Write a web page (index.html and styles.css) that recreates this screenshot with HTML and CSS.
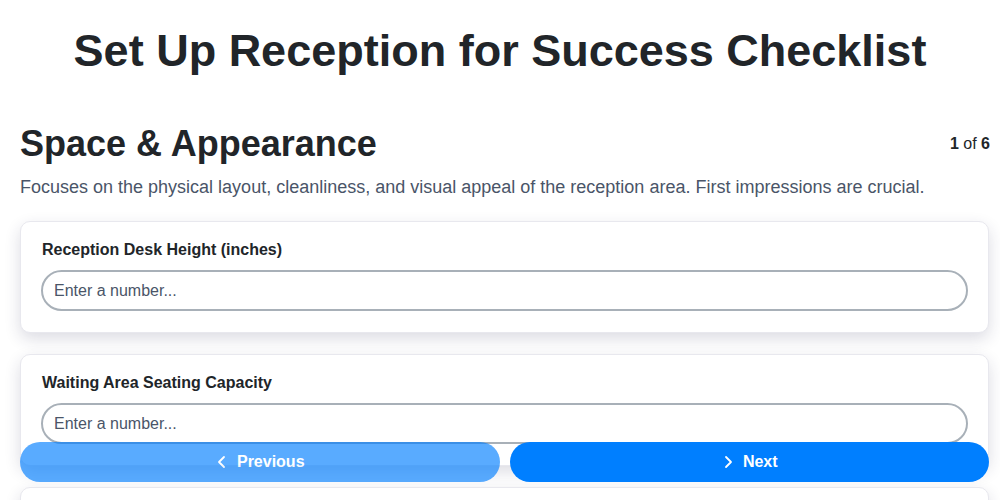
FILE: index.html
```html
<!DOCTYPE html>
<html>
<head>
<meta charset="utf-8">
<link rel="stylesheet" href="styles.css">
</head>
<body>
<main class="page">
  <h1 class="title">Set Up Reception for Success Checklist</h1>
  <section class="section">
    <div class="section-head">
      <h2 class="section-title">Space &amp; Appearance</h2>
      <div class="counter"><b>1</b> of <b>6</b></div>
    </div>
    <p class="section-desc">Focuses on the physical layout, cleanliness, and visual appeal of the reception area. First impressions are crucial.</p>
    <div class="cards">
      <div class="card">
        <label class="card-label">Reception Desk Height (inches)</label>
        <input class="card-input" type="number" placeholder="Enter a number...">
      </div>
      <div class="card">
        <label class="card-label">Waiting Area Seating Capacity</label>
        <input class="card-input" type="number" placeholder="Enter a number...">
      </div>
      <div class="card card-last"></div>
    </div>
  </section>
</main>
<nav class="nav">
  <button class="btn btn-prev"><svg width="14" height="14" viewBox="0 0 14 14"><path d="M9 2 L4 7 L9 12" fill="none" stroke="#fff" stroke-width="1.8" stroke-linecap="round" stroke-linejoin="round"/></svg><span>Previous</span></button>
  <button class="btn btn-next"><svg width="14" height="14" viewBox="0 0 14 14"><path d="M5 2 L10 7 L5 12" fill="none" stroke="#fff" stroke-width="1.8" stroke-linecap="round" stroke-linejoin="round"/></svg><span>Next</span></button>
</nav>
</body>
</html>
```
FILE: styles.css
```css
* { box-sizing: border-box; }
html, body { margin: 0; padding: 0; background: #fff; }
body { font-family: "Liberation Sans", Arial, sans-serif; color: #212529; }
.page { padding: 0; }
.title {
  margin: 0;
  padding-top: 26px;
  font-size: 45px;
  line-height: 50px;
  font-weight: 700;
  text-align: center;
  color: #212529;
}
.section { margin-top: 46px; padding: 0 10px 0 20px; }
.section-head {
  display: flex;
  justify-content: space-between;
  align-items: center;
}
.section-title {
  margin: 0;
  font-size: 36px;
  line-height: 44px;
  font-weight: 700;
}
.counter { font-size: 16px; color: #212529; }
.counter b { font-weight: 700; }
.section-desc {
  margin: 9px 0 0;
  font-size: 18px;
  line-height: 24px;
  color: #4a5568;
}
.cards {
  margin-top: 22px;
  display: flex;
  flex-direction: column;
  gap: 21px;
  padding-right: 1px;
}
.card {
  background: #fff;
  border: 1px solid #e8e8ee;
  border-radius: 10px;
  padding: 18px 20px 21px;
  box-shadow: 0 6px 16px rgba(40, 40, 80, 0.16);
  display: flex;
  flex-direction: column;
}
.card-last { height: 120px; }
.card-label {
  font-size: 16px;
  font-weight: 700;
  line-height: 20px;
  color: #212529;
  margin-bottom: 10px;
  margin-left: 1px;
}
.card-input {
  height: 41px;
  border: 2px solid #a8b0b8;
  border-radius: 21px;
  padding: 0 11px;
  font-family: "Liberation Sans", Arial, sans-serif;
  font-size: 16px;
  color: #212529;
  background: #fff;
  outline: none;
}
.card-input::placeholder { color: #4a5568; }
.nav {
  position: fixed;
  left: 20px;
  right: 11px;
  bottom: 18px;
  display: flex;
  gap: 10px;
}
.btn {
  flex: 1;
  height: 40px;
  border: none;
  border-radius: 20px;
  color: #fff;
  font-family: "Liberation Sans", Arial, sans-serif;
  font-size: 16px;
  font-weight: 700;
  display: flex;
  align-items: center;
  justify-content: center;
  gap: 8px;
}
.btn-prev { background: #007fff; opacity: 0.65; }
.btn-next { background: #007fff; }
```
